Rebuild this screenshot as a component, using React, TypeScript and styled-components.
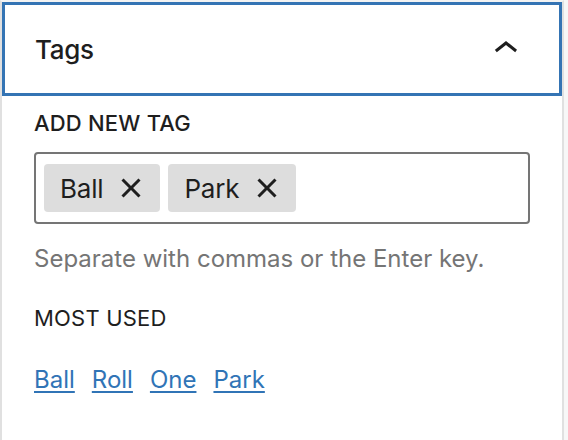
import React from 'react';
import styled, {createGlobalStyle} from 'styled-components';

const GlobalStyle = createGlobalStyle`
  html, body {
    margin: 0;
    padding: 0;
    background: #f7f7f7;
  }
  body {
    font-family: Inter, "Noto Sans", sans-serif;
    color: #1e1e1e;
    -webkit-font-smoothing: antialiased;
  }
`;

const Sidebar = styled.div`
  width: 560px;
  height: 440px;
  box-sizing: content-box;
  background: #fff;
  border-left: 2px solid #e0e0e0;
  border-right: 2px solid #e0e0e0;
  border-top: 2px solid #f3f3f3;
  display: flex;
  flex-direction: column;
`;

const PanelHeader = styled.button`
  height: 94px;
  width: 100%;
  display: flex;
  align-items: center;
  justify-content: space-between;
  padding: 0 32px 0 33px;
  border: none;
  background: #fff;
  box-shadow: inset 0 0 0 3px #3474b4;
  font-family: inherit;
  font-size: 26px;
  font-weight: 500;
  letter-spacing: -0.3px;
  color: #1e1e1e;
  cursor: pointer;
  box-sizing: border-box;
`;

const PanelBody = styled.div`
  display: flex;
  flex-direction: column;
  padding: 11px 32px 0 32px;
`;

const SectionLabel = styled.div<{ $strong?: boolean }>`
  font-size: 22px;
  line-height: 32px;
  font-weight: ${p => (p.$strong ? 500 : 400)};
  text-transform: uppercase;
  letter-spacing: 0.2px;
`;

const TokenField = styled.div`
  margin-top: 13px;
  height: 72px;
  box-sizing: border-box;
  border: 2px solid #757575;
  border-radius: 4px;
  padding: 10px 8px;
  display: flex;
  align-items: center;
  gap: 8px;
`;

const Token = styled.span`
  height: 48px;
  display: inline-flex;
  align-items: center;
  background: #ddd;
  border-radius: 4px;
  padding: 0 5px 0 16px;
  font-size: 26px;
  letter-spacing: -0.2px;
`;

const RemoveButton = styled.span`
  width: 48px;
  height: 48px;
  margin-left: 4px;
  display: inline-flex;
  align-items: center;
  justify-content: center;
`;

const Help = styled.p`
  margin: 19px 0 0;
  font-size: 24px;
  line-height: 32px;
  color: #757575;
`;

const MostUsed = styled(SectionLabel)`
  margin-top: 27px;
`;

const LinkList = styled.div`
  margin-top: 26px;
  display: flex;
  gap: 17px;
  font-size: 24px;
  line-height: 40px;
`;

const TagLink = styled.a`
  color: #3074b6;
  text-decoration: underline;
  text-decoration-thickness: 2px;
  text-underline-offset: 3px;
  cursor: pointer;
`;

const ChevronUp = () => (
  <svg width="48" height="48" viewBox="0 0 24 24" aria-hidden>
    <path d="M6.5 12.4L12 8l5.5 4.4-.9 1.2L12 10l-4.6 3.6-1-1.2z" fill="#1e1e1e" />
  </svg>
);

const CloseSmall = () => (
  <svg width="48" height="48" viewBox="0 0 24 24" aria-hidden>
    <path
      d="M12 13.06l3.712 3.713 1.061-1.06L13.061 12l3.713-3.712-1.06-1.06L12 10.938 8.288 7.227l-1.061 1.06L10.939 12l-3.712 3.712 1.06 1.061L12 13.061z"
      fill="#1e1e1e"
    />
  </svg>
);

const selected = ['Ball', 'Park'];
const mostUsed = ['Ball', 'Roll', 'One', 'Park'];

export default function App() {
  return (
    <>
      <GlobalStyle />
      <Sidebar>
        <PanelHeader>
          <span>Tags</span>
          <ChevronUp />
        </PanelHeader>
        <PanelBody>
          <SectionLabel $strong>Add new tag</SectionLabel>
          <TokenField>
            {selected.map(tag => (
              <Token key={tag}>
                {tag}
                <RemoveButton>
                  <CloseSmall />
                </RemoveButton>
              </Token>
            ))}
          </TokenField>
          <Help>Separate with commas or the Enter key.</Help>
          <MostUsed>Most used</MostUsed>
          <LinkList>
            {mostUsed.map(tag => (
              <TagLink key={tag}>{tag}</TagLink>
            ))}
          </LinkList>
        </PanelBody>
      </Sidebar>
    </>
  );
}
